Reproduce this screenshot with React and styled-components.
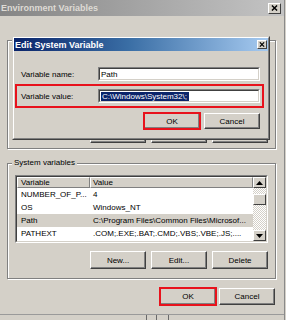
import React from 'react';
import styled, { createGlobalStyle, css } from 'styled-components';

const Global = createGlobalStyle`
  html, body { margin: 0; padding: 0; background: #d4d0c8; }
  body { font-family: "Liberation Sans", Arial, sans-serif; font-size: 8px; color: #000; }
  * { box-sizing: border-box; }
`;

const Screen = styled.div`
  position: relative;
  width: 286px;
  height: 320px;
  overflow: hidden;
  background: #d4d0c8;
`;

const Window = styled.div`
  display: flex;
  flex-direction: column;
  width: 285px;
  height: 320px;
  border-right: 1px solid #8a8a8a;
`;

const TitleBar = styled.div`
  display: flex;
  align-items: center;
  justify-content: space-between;
  height: 16px;
  flex: none;
  padding: 0 3px 0 1px;
  background: linear-gradient(90deg, #858585 0%, #a8a8a8 55%, #c4c4c4 100%);
`;

const TitleText = styled.span`
  font-weight: bold;
  font-size: 9px;
  color: ${p => (p.$active ? '#fff' : '#dedbd5')};
  white-space: nowrap;
`;

const CloseBox = styled.div`
  display: flex;
  align-items: center;
  justify-content: center;
  width: ${p => p.$w}px;
  height: ${p => p.$h}px;
  background: #d4d0c8;
  border: 1px solid;
  border-color: #fff #404040 #404040 #fff;
`;

const Body = styled.div`
  display: flex;
  flex-direction: column;
  flex: 1;
  padding: 0 8px 0 7px;
`;

const Group = styled.fieldset`
  margin: ${p => p.$top}px 0 0;
  padding: 7px 7px ${p => p.$bottom}px 7px;
  border: 1px solid #808080;
  box-shadow: 1px 1px 0 #fff, inset 1px 1px 0 #fff;
  min-width: 0;
`;

const Legend = styled.legend`
  padding: 0 2px;
  margin-left: -3px;
  line-height: 10px;
  font-size: 8px;
  background: #d4d0c8;
`;

const ListOuter = styled.div`
  height: ${p => p.$h}px;
  border: 1px solid;
  border-color: #808080 #fff #fff #808080;
`;

const ListInner = styled.div`
  display: flex;
  height: 100%;
  background: #fff;
  border: 1px solid;
  border-color: #404040 #d4d0c8 #d4d0c8 #404040;
`;

const Table = styled.div`
  display: flex;
  flex-direction: column;
  flex: 1;
  min-width: 0;
`;

const HeaderRow = styled.div`
  display: grid;
  grid-template-columns: 73px 1fr;
  height: 11px;
`;

const HeaderCell = styled.div`
  padding-left: ${p => p.$pad}px;
  line-height: 9px;
  background: #d4d0c8;
  border: 1px solid;
  border-color: #fff #808080 #808080 #fff;
  white-space: nowrap;
  overflow: hidden;
`;

const DataRow = styled.div`
  display: grid;
  grid-template-columns: 73px 1fr;
  height: 13px;
  line-height: 13px;
  background: ${p => (p.$selected ? '#d4d0c8' : 'transparent')};
`;

const Cell = styled.div`
  padding-left: ${p => p.$pad}px;
  white-space: nowrap;
  overflow: hidden;
`;

const ScrollBar = styled.div`
  display: flex;
  flex-direction: column;
  width: 13px;
  flex: none;
`;

const ScrollBtn = styled.div`
  display: flex;
  align-items: center;
  justify-content: center;
  height: 11px;
  flex: none;
  background: #d4d0c8;
  border: 1px solid;
  border-color: #fff #404040 #404040 #fff;
`;

const Track = styled.div`
  flex: 1;
  display: flex;
  flex-direction: column;
  background-color: #eeece8;
  background-image: conic-gradient(#d4d0c8 25%, #fff 0 50%, #d4d0c8 0 75%, #fff 0);
  background-size: 2px 2px;
`;

const Thumb = styled.div`
  margin-top: 6px;
  height: 11px;
  background: #d4d0c8;
  border: 1px solid;
  border-color: #fff #404040 #404040 #fff;
`;

const ButtonRow = styled.div`
  display: flex;
  justify-content: flex-end;
  gap: ${p => p.$gap}px;
  margin-top: ${p => p.$top}px;
  padding-right: ${p => p.$right || 0}px;
`;

const Button = styled.div`
  display: flex;
  align-items: center;
  justify-content: center;
  width: ${p => p.$w || 56}px;
  height: ${p => p.$h}px;
  background: #d4d0c8;
  border: 1px solid;
  border-color: #fff #404040 #404040 #fff;
  box-shadow: inset -1px -1px 0 #808080;
  font-size: 8px;
  ${p =>
    p.$highlight &&
    css`
      outline: 2px solid #e8121c;
      outline-offset: -1px;
    `}
`;

const BottomEdge = styled.div`
  display: flex;
  margin-top: auto;
  height: 6px;
  flex: none;
  border-top: 1px solid #9a9a9a;
  padding-left: 146px;
`;

const Tick = styled.div`
  width: 1px;
  margin-left: ${p => p.$ml}px;
  background: #6a6a6a;
`;

const Dialog = styled.div`
  position: absolute;
  left: 12px;
  top: 36px;
  width: 258px;
  height: 104px;
  border: 1px solid;
  border-color: #d4d0c8 #404040 #404040 #d4d0c8;
  background: #d4d0c8;
`;

const DialogInner = styled.div`
  display: flex;
  flex-direction: column;
  height: 100%;
  border: 1px solid;
  border-color: #fff #808080 #808080 #fff;
`;

const DialogTitle = styled(TitleBar)`
  height: 13px;
  padding: 0 1px 0 1px;
  background: linear-gradient(90deg, #0a246a 0%, #3a6ea5 45%, #a6caf0 100%);
`;

const DialogBody = styled.div`
  display: flex;
  flex-direction: column;
  padding: 16px 0 0 1px;
`;

const FieldRow = styled.div`
  display: flex;
  align-items: center;
  width: 249px;
  margin-top: ${p => p.$top || 0}px;
  ${p =>
    p.$highlight
      ? css`
          border: 2px solid #e8121c;
          padding: 3px 2px 3px 4px;
        `
      : css`
          padding: 0 4px 0 6px;
        `}
`;

const Label = styled.span`
  width: 77px;
  flex: none;
  white-space: nowrap;
`;

const Field = styled.div`
  flex: 1;
  height: 14px;
  border: 1px solid;
  border-color: #808080 #fff #fff #808080;
`;

const FieldInner = styled.div`
  display: flex;
  align-items: center;
  height: 100%;
  padding-left: 1px;
  background: #fff;
  border: 1px solid;
  border-color: #404040 #d4d0c8 #d4d0c8 #404040;
  white-space: nowrap;
  overflow: hidden;
`;

const Selected = styled.span`
  background: #0a246a;
  color: #fff;
  line-height: 9px;
  padding: 0 2px 0 1px;
`;

const XIcon = ({ size = 7 }) => (
  <svg width={size} height={size - 1} viewBox="0 0 8 7">
    <path d="M1 0.5 L7 6.5 M7 0.5 L1 6.5" stroke="#000" strokeWidth="1.6" />
  </svg>
);

const Arrow = ({ down }) => (
  <svg width="7" height="4" viewBox="0 0 7 4">
    <polygon points={down ? '0,0 7,0 3.5,4' : '0,4 7,4 3.5,0'} fill="#000" />
  </svg>
);

const systemRows = [
  ['NUMBER_OF_P...', '4'],
  ['OS', 'Windows_NT'],
  ['Path', 'C:\\Program Files\\Common Files\\Microsof...', true],
  ['PATHEXT', '.COM;.EXE;.BAT;.CMD;.VBS;.VBE;.JS;....'],
];

function VarList({ rows, height }) {
  return (
    <ListOuter $h={height}>
      <ListInner>
        <Table>
          <HeaderRow>
            <HeaderCell $pad={3}>Variable</HeaderCell>
            <HeaderCell $pad={2}>Value</HeaderCell>
          </HeaderRow>
          {rows.map(([n, v, sel]) => (
            <DataRow key={n} $selected={sel}>
              <Cell $pad={4}>{n}</Cell>
              <Cell $pad={3}>{v}</Cell>
            </DataRow>
          ))}
        </Table>
        <ScrollBar>
          <ScrollBtn><Arrow /></ScrollBtn>
          <Track><Thumb /></Track>
          <ScrollBtn><Arrow down /></ScrollBtn>
        </ScrollBar>
      </ListInner>
    </ListOuter>
  );
}

function GroupButtons() {
  return (
    <ButtonRow $gap={5} $top={8}>
      <Button $h={18}>New...</Button>
      <Button $h={18}>Edit...</Button>
      <Button $h={18}>Delete</Button>
    </ButtonRow>
  );
}

export default function App() {
  return (
    <Screen>
      <Global />
      <Window>
        <TitleBar>
          <TitleText>Environment Variables</TitleText>
          <CloseBox $w={13} $h={11}><XIcon /></CloseBox>
        </TitleBar>
        <Body>
          <Group $top={19} $bottom={5}>
            <Legend>User variables for Administrator</Legend>
            <VarList rows={[]} height={65} />
            <GroupButtons />
          </Group>
          <Group $top={9} $bottom={9}>
            <Legend>System variables</Legend>
            <VarList rows={systemRows} height={68} />
            <GroupButtons />
          </Group>
          <ButtonRow $gap={3} $top={9} $right={1}>
            <Button $h={17} $highlight>OK</Button>
            <Button $h={17}>Cancel</Button>
          </ButtonRow>
        </Body>
        <BottomEdge>
          <Tick $ml={0} />
          <Tick $ml={9} />
          <Tick $ml={11} />
        </BottomEdge>
      </Window>

      <Dialog>
        <DialogInner>
          <DialogTitle>
            <TitleText $active>Edit System Variable</TitleText>
            <CloseBox $w={10} $h={9}><XIcon size={6} /></CloseBox>
          </DialogTitle>
          <DialogBody>
            <FieldRow>
              <Label>Variable name:</Label>
              <Field><FieldInner>Path</FieldInner></Field>
            </FieldRow>
            <FieldRow $highlight $top={3}>
              <Label>Variable value:</Label>
              <Field>
                <FieldInner>
                  <Selected>C:\Windows\System32\;</Selected>
                </FieldInner>
              </Field>
            </FieldRow>
            <ButtonRow $gap={4} $top={5} $right={8}>
              <Button $h={16} $highlight>OK</Button>
              <Button $h={16}>Cancel</Button>
            </ButtonRow>
          </DialogBody>
        </DialogInner>
      </Dialog>
    </Screen>
  );
}
